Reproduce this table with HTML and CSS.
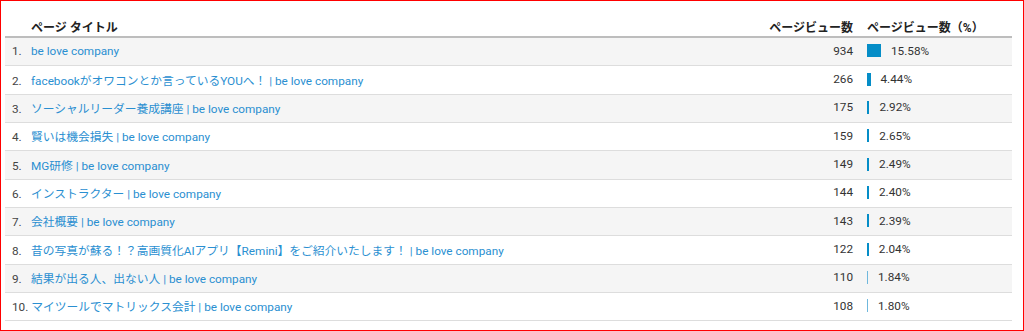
FILE: index.html
```html
<!DOCTYPE html>
<html lang="ja">
<head>
<meta charset="utf-8">
<title>ページ タイトル</title>
<link rel="stylesheet" href="styles.css">
</head>
<body>
<div class="frame">
  <div class="report">
    <div class="row head">
      <div class="c-title">ページ タイトル</div>
      <div class="c-val">ページビュー数</div>
      <div class="c-pct">ページビュー数（%）</div>
    </div>
    <div class="row odd">
      <div class="c-title"><span class="num">1.</span><a class="link">be love company</a></div>
      <div class="c-val">934</div>
      <div class="c-pct"><span class="bar" style="width:14px"></span>15.58%</div>
    </div>
    <div class="row">
      <div class="c-title"><span class="num">2.</span><a class="link">facebookがオワコンとか言っているYOUへ！ | be love company</a></div>
      <div class="c-val">266</div>
      <div class="c-pct"><span class="bar" style="width:3.5px"></span>4.44%</div>
    </div>
    <div class="row odd">
      <div class="c-title"><span class="num">3.</span><a class="link">ソーシャルリーダー養成講座 | be love company</a></div>
      <div class="c-val">175</div>
      <div class="c-pct"><span class="bar" style="width:2.4px"></span>2.92%</div>
    </div>
    <div class="row">
      <div class="c-title"><span class="num">4.</span><a class="link">賢いは機会損失 | be love company</a></div>
      <div class="c-val">159</div>
      <div class="c-pct"><span class="bar" style="width:2.2px"></span>2.65%</div>
    </div>
    <div class="row odd">
      <div class="c-title"><span class="num">5.</span><a class="link">MG研修 | be love company</a></div>
      <div class="c-val">149</div>
      <div class="c-pct"><span class="bar" style="width:2.1px"></span>2.49%</div>
    </div>
    <div class="row">
      <div class="c-title"><span class="num">6.</span><a class="link">インストラクター | be love company</a></div>
      <div class="c-val">144</div>
      <div class="c-pct"><span class="bar" style="width:2px"></span>2.40%</div>
    </div>
    <div class="row odd">
      <div class="c-title"><span class="num">7.</span><a class="link">会社概要 | be love company</a></div>
      <div class="c-val">143</div>
      <div class="c-pct"><span class="bar" style="width:2px"></span>2.39%</div>
    </div>
    <div class="row">
      <div class="c-title"><span class="num">8.</span><a class="link">昔の写真が蘇る！？高画質化AIアプリ【Remini】をご紹介いたします！ | be love company</a></div>
      <div class="c-val">122</div>
      <div class="c-pct"><span class="bar" style="width:1.8px"></span>2.04%</div>
    </div>
    <div class="row odd">
      <div class="c-title"><span class="num">9.</span><a class="link">結果が出る人、出ない人 | be love company</a></div>
      <div class="c-val">110</div>
      <div class="c-pct"><span class="bar thin" style="width:1px"></span>1.84%</div>
    </div>
    <div class="row">
      <div class="c-title"><span class="num">10.</span><a class="link">マイツールでマトリックス会計 | be love company</a></div>
      <div class="c-val">108</div>
      <div class="c-pct"><span class="bar thin" style="width:1px"></span>1.80%</div>
    </div>
  </div>
</div>
</body>
</html>
```
FILE: styles.css
```css
html, body {
  margin: 0;
  padding: 0;
  background: #ffffff;
}
.frame {
  box-sizing: border-box;
  width: 1024px;
  height: 331px;
  border: 1px solid #ff0000;
  padding: 13px 11px 0 4px;
  overflow: hidden;
  font-family: Roboto, "Noto Sans CJK JP", sans-serif;
  font-size: 11.75px;
  color: #333333;
}
.report {
  display: flex;
  flex-direction: column;
}
.row {
  display: grid;
  grid-template-columns: 1fr 134px 145px;
  align-items: center;
  box-sizing: border-box;
  height: 28.35px;
  padding-bottom: 2px;
  border-bottom: 1px solid #dddddd;
}
.row.odd {
  background: #f5f5f5;
}
.row.head {
  height: 24px;
  padding-top: 2px;
  padding-bottom: 0;
  border-bottom: 2px solid #bdbdbd;
  font-size: 12px;
  font-weight: 700;
  color: #222222;
  background: #ffffff;
}
.head .c-title {
  padding-left: 26px;
}
.c-title {
  padding-left: 7px;
  white-space: nowrap;
  overflow: hidden;
}
.num {
  display: inline-block;
  box-sizing: border-box;
  min-width: 19px;
  padding-right: 3px;
  color: #444444;
}
.link {
  color: #2a8fd1;
  text-decoration: none;
}
.c-val {
  text-align: right;
  padding-right: 14px;
}
.c-pct {
  display: flex;
  align-items: center;
  white-space: nowrap;
}
.bar {
  display: inline-block;
  height: 13px;
  background: #058dc7;
  margin-right: 10px;
}
.bar.thin {
  background: #6fb8dd;
}
```
